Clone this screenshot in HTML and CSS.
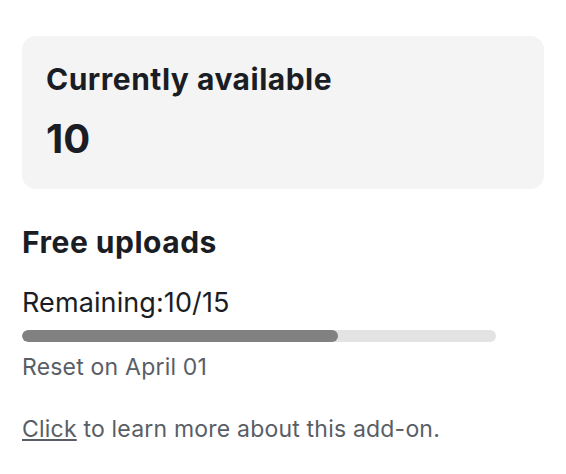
FILE: index.html
```html
<!DOCTYPE html>
<html>
<head>
<meta charset="utf-8">
<link rel="stylesheet" href="styles.css">
</head>
<body>
<div class="page">
  <section class="card">
    <h2 class="card-title">Currently available</h2>
    <div class="card-value">10</div>
  </section>
  <section class="uploads">
    <h2 class="uploads-title">Free uploads</h2>
    <div class="remaining">Remaining:10/15</div>
    <div class="bar"><div class="bar-fill" style="width:66.7%"></div></div>
    <div class="reset">Reset on April 01</div>
    <p class="learn"><a class="learn-link" href="#">Click</a> to learn more about this add-on.</p>
  </section>
</div>
</body>
</html>
```

FILE: styles.css
```css
html, body {
  margin: 0;
  padding: 0;
  background: #ffffff;
}
body {
  font-family: Inter, "Noto Sans", sans-serif;
  color: #1b1d24;
}
.page {
  padding: 36px 22px 0 22px;
  width: 522px;
}
.card {
  background: #f4f4f4;
  border-radius: 14px;
  padding: 25px 24px 26px 24px;
}
.card-title {
  margin: 0;
  font-size: 30px;
  font-weight: 700;
  line-height: 36px;
  letter-spacing: 0.5px;
}
.card-value {
  margin-top: 18px;
  font-size: 40px;
  font-weight: 700;
  line-height: 48px;
}
.uploads {
  padding-top: 35px;
}
.uploads-title {
  margin: 0;
  font-size: 30px;
  font-weight: 700;
  line-height: 36px;
  letter-spacing: 0.5px;
}
.remaining {
  margin-top: 26px;
  font-size: 27px;
  line-height: 34px;
  letter-spacing: 0.1px;
}
.bar {
  margin-top: 10px;
  width: 474px;
  height: 12px;
  border-radius: 6px;
  background: #e3e3e3;
  overflow: hidden;
}
.bar-fill {
  height: 100%;
  background: #818181;
  border-radius: 6px;
}
.reset {
  margin-top: 11px;
  font-size: 23px;
  line-height: 28px;
  letter-spacing: 0.2px;
  color: #595e66;
}
.learn {
  margin: 34px 0 0 0;
  font-size: 23px;
  line-height: 28px;
  letter-spacing: 0.2px;
  color: #595e66;
}
.learn-link {
  color: #595e66;
  text-decoration: underline;
}
```
